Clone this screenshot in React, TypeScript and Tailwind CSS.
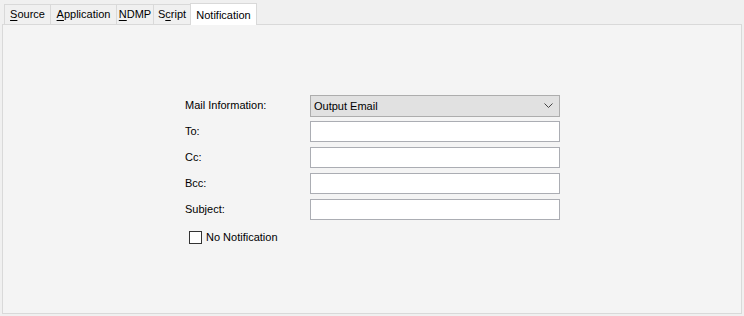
import { useState } from 'react';

const font = { fontFamily: '"Liberation Sans", Arial, sans-serif' };

function Tab({ label, u, w, selected = false }: { label: string; u?: number; w: string; selected?: boolean }) {
  const text =
    u === undefined ? (
      label
    ) : (
      <>
        {label.slice(0, u)}
        <span className="underline underline-offset-2">{label[u]}</span>
        {label.slice(u + 1)}
      </>
    );
  if (selected) {
    return (
      <div className={`relative z-10 -mb-px h-[22px] ${w} text-center pt-[3px] bg-white border border-b-0 border-[#d9d9d9] text-black`}>
        {text}
      </div>
    );
  }
  return (
    <div className={`h-[20px] ${w} text-center pt-[4px] bg-[#f0f0f0] border-t border-l border-[#d9d9d9] text-black leading-none whitespace-nowrap`}>
      {text}
    </div>
  );
}

function Field({ label, children }: { label: string; children: React.ReactNode }) {
  return (
    <div className="flex items-start h-[26px]">
      <span className="w-[125px] leading-[21px]">{label}</span>
      {children}
    </div>
  );
}

export default function App() {
  const [noNotify, setNoNotify] = useState(false);

  return (
    <div className="w-[744px] h-[316px] bg-[#f0f0f0] text-[11px] text-black" style={font}>
      {/* Tabs */}
      <div className="flex items-end h-[24px] pl-[4px]">
        <Tab label="Source" u={0} w="w-[46px]" />
        <Tab label="Application" u={0} w="w-[66px]" />
        <Tab label="NDMP" u={0} w="w-[37px]" />
        <Tab label="Script" u={1} w="w-[37px]" />
        <Tab label="Notification" w="w-[67px]" selected />
      </div>

      {/* Panel */}
      <div className="mx-[2px] h-[290px] border border-[#d9d9d9] bg-[#f4f4f4]">
        <div className="pl-[182px] pt-[70px] flex flex-col">
          <Field label="Mail Information:">
            <div className="w-[250px] h-[22px] border border-[#adadad] bg-[#e1e1e1] flex items-center justify-between pl-[3px] pr-[6px]">
              <span>Output Email</span>
              <svg width="9" height="6" viewBox="0 0 9 6" fill="none">
                <path d="M0.5 0.5 L4.5 4.5 L8.5 0.5" stroke="#444" strokeWidth="1" />
              </svg>
            </div>
          </Field>
          <Field label="To:">
            <div className="w-[250px] h-[21px] border border-[#abadb3] bg-white" />
          </Field>
          <Field label="Cc:">
            <div className="w-[250px] h-[21px] border border-[#abadb3] bg-white" />
          </Field>
          <Field label="Bcc:">
            <div className="w-[250px] h-[21px] border border-[#abadb3] bg-white" />
          </Field>
          <Field label="Subject:">
            <div className="w-[250px] h-[21px] border border-[#abadb3] bg-white" />
          </Field>
          <label className="flex items-center gap-[4px] ml-[4px] mt-[4px]">
            <button
              onClick={() => setNoNotify(!noNotify)}
              className="w-[13px] h-[13px] border border-[#333] bg-white flex items-center justify-center"
            >
              {noNotify && (
                <svg width="9" height="9" viewBox="0 0 9 9">
                  <path d="M1 4.5 L3.5 7 L8 1.5" stroke="#000" strokeWidth="1.4" fill="none" />
                </svg>
              )}
            </button>
            <span>No Notification</span>
          </label>
        </div>
      </div>
    </div>
  );
}
